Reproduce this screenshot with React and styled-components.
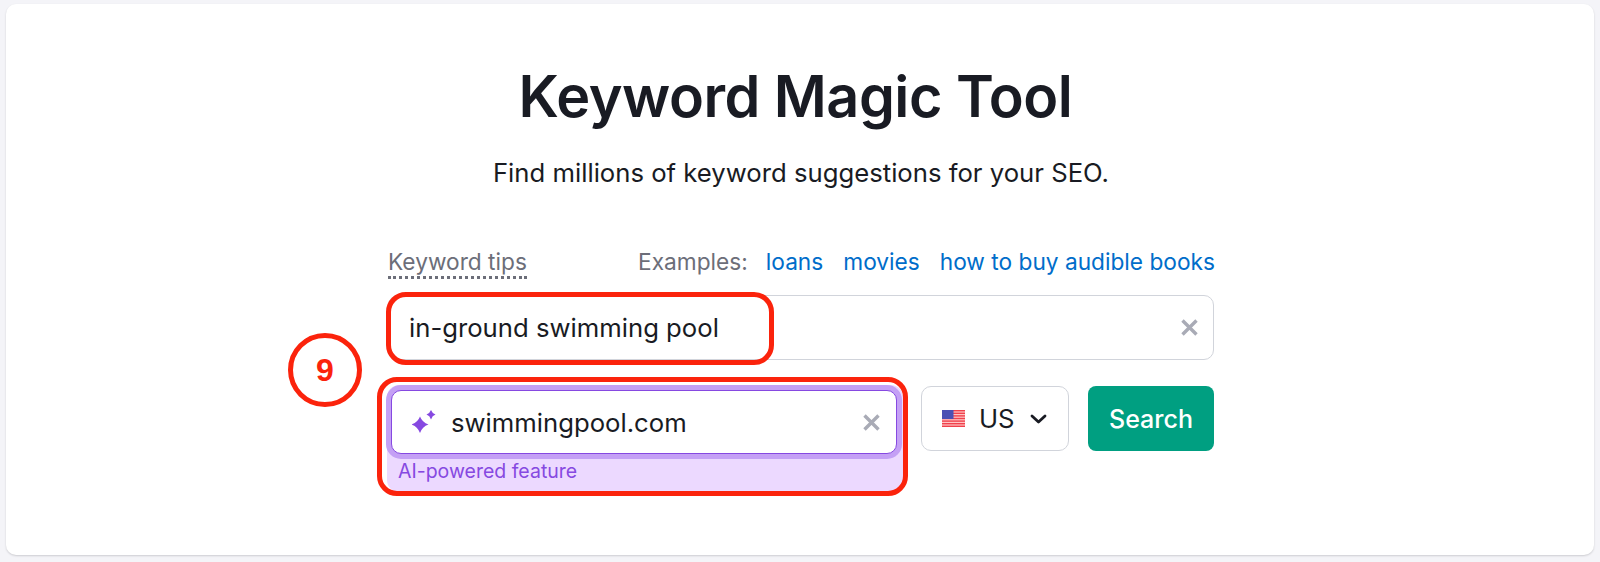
import React from "react";
import styled, { createGlobalStyle } from "styled-components";

const Global = createGlobalStyle`
  html, body { margin: 0; padding: 0; background: #f4f4f8; }
  body { font-family: Inter, "Liberation Sans", sans-serif; color: #191b23; }
`;

const Page = styled.div`
  width: 1600px;
  height: 562px;
  padding: 4px 6px 7px;
  box-sizing: border-box;
`;

const Card = styled.main`
  height: 100%;
  background: #fff;
  border-radius: 10px;
  box-shadow: 0 1px 2px rgba(25, 27, 35, 0.18);
  display: flex;
  flex-direction: column;
  align-items: center;
  padding-top: 56px;
  box-sizing: border-box;
`;

const Title = styled.h1`
  margin: 0 0 0 -9px;
  font-size: 57.5px;
  line-height: 72px;
  font-weight: 600;
  letter-spacing: -0.5px;
  color: #191b23;
`;

const Subtitle = styled.p`
  margin: 25px 0 0 2px;
  font-size: 25.7px;
  line-height: 32px;
  color: #191b23;
`;

const Form = styled.div`
  position: relative;
  width: 826px;
  margin: 59px 0 0 2px;
`;

const TopRow = styled.div`
  display: flex;
  justify-content: space-between;
  align-items: flex-start;
  height: 47px;
  font-size: 22.7px;
  line-height: 28px;
`;

const Tips = styled.span`
  color: #6c6e79;
  border-bottom: 3px dotted #6c6e79;
`;

const Examples = styled.div`
  display: flex;
  gap: 20px;
  margin-right: -1px;
`;

const ExamplesLabel = styled.span`
  color: #6c6e79;
  margin-right: -2px;
`;

const ExampleLink = styled.a`
  color: #006dca;
  text-decoration: none;
`;

const InputBox = styled.div`
  height: 65px;
  box-sizing: border-box;
  border: 1.5px solid #d1d4db;
  border-radius: 10px;
  display: flex;
  align-items: center;
  justify-content: space-between;
  padding: 0 15px 0 20px;
  font-size: 25.7px;
`;

const ClearIcon = styled.svg`
  width: 17px;
  height: 17px;
  display: block;
  flex: none;
`;

const BottomRow = styled.div`
  display: flex;
  align-items: flex-start;
  margin-top: 26px;
`;

const AiWrap = styled.div`
  width: 516px;
  height: 107px;
  margin: -1px 0 0 -1px;
  background: #ecd9ff;
  border-radius: 12px;
  box-sizing: border-box;
  flex: none;
  padding-top: 5px;
`;

const AiInput = styled.div`
  margin: 0 6px 0 4px;
  height: 64px;
  box-sizing: border-box;
  background: #fff;
  border: 1.5px solid #8649e1;
  border-radius: 10px;
  box-shadow: 0 0 0 5px #c4a0f5;
  display: flex;
  align-items: center;
  padding: 0 16px 0 20px;
  font-size: 25.7px;
`;

const AiValue = styled.span`
  flex: 1;
  margin-left: 15px;
`;

const AiNote = styled.div`
  margin: 5px 0 0 11px;
  font-size: 19.5px;
  line-height: 24px;
  color: #8649e1;
`;

const Select = styled.div`
  width: 148px;
  height: 65px;
  margin-left: 18px;
  box-sizing: border-box;
  border: 1.5px solid #d1d4db;
  border-radius: 10px;
  display: flex;
  align-items: center;
  padding-left: 20px;
  font-size: 25.7px;
  flex: none;
`;

const SelectValue = styled.span`
  margin: -1px 15px 0 14px;
`;

const SearchButton = styled.button`
  width: 126px;
  height: 65px;
  margin-left: 19px;
  border: 0;
  border-radius: 8px;
  background: #009f81;
  color: #fff;
  font: 500 25px Inter, "Liberation Sans", sans-serif;
  flex: none;
`;

const Marker = styled.div`
  position: absolute;
  box-sizing: border-box;
  border: 5px solid #fb230c;
  pointer-events: none;
`;

const KeywordMarker = styled(Marker)`
  left: -2px;
  top: 44px;
  width: 388px;
  height: 73px;
  border-radius: 20px;
`;

const AiMarker = styled(Marker)`
  left: -11px;
  top: 129px;
  width: 531px;
  height: 119px;
  border-radius: 20px;
`;

const NumberMarker = styled(Marker)`
  left: -100px;
  top: 85px;
  width: 74px;
  height: 74px;
  border-radius: 50%;
  display: flex;
  align-items: center;
  justify-content: center;
  color: #fb230c;
  font-family: "Liberation Sans", Arial, sans-serif;
  font-size: 32px;
  font-weight: 700;
`;

const Clear = () => (
  <ClearIcon viewBox="0 0 17 17" fill="none" stroke="#a9abb6" strokeWidth="3.4">
    <path d="M1.500 1.500l14 14M15.500 1.500l-14 14" />
  </ClearIcon>
);

const Sparkles = () => (
  <svg width="24" height="24" viewBox="0 0 24 24" fill="#8649e1" style={{ flex: "none" }}>
    <path d="M8 6.500Q10.200 12.300 16.500 14.500Q10.200 16.700 8 23Q5.800 16.700 -.5 14.500Q5.800 12.300 8 6.500z" />
    <path d="M19 0Q20.200 3.300 23.500 4.500Q20.200 5.700 19 9.500Q17.800 5.700 14.500 4.500Q17.800 3.300 19 0z" />
  </svg>
);

const Flag = () => (
  <svg width="23" height="17" viewBox="0 0 23 17" style={{ flex: "none" }}>
    <rect width="23" height="17" fill="#ffc4c4" />
    {[0, 2.600, 5.200, 7.800, 10.400, 13, 15.600].map((y) => (
      <rect key={y} y={y} width="23" height="1.400" fill="#f0414c" />
    ))}
    <rect width="11.500" height="9" fill="#4a50b4" />
  </svg>
);

const Chevron = () => (
  <svg width="17" height="10" viewBox="0 0 17 10" fill="none" stroke="#191b23" strokeWidth="2.800" strokeLinecap="round" strokeLinejoin="round">
    <path d="M2 2l6.500 6L15 2" />
  </svg>
);

export default function App() {
  return (
    <Page>
      <Global />
      <Card>
        <Title>Keyword Magic Tool</Title>
        <Subtitle>Find millions of keyword suggestions for your SEO.</Subtitle>
        <Form>
          <TopRow>
            <Tips>Keyword tips</Tips>
            <Examples>
              <ExamplesLabel>Examples:</ExamplesLabel>
              <ExampleLink>loans</ExampleLink>
              <ExampleLink>movies</ExampleLink>
              <ExampleLink>how to buy audible books</ExampleLink>
            </Examples>
          </TopRow>
          <InputBox>
            <span>in-ground swimming pool</span>
            <Clear />
          </InputBox>
          <BottomRow>
            <AiWrap>
              <AiInput>
                <Sparkles />
                <AiValue>swimmingpool.com</AiValue>
                <Clear />
              </AiInput>
              <AiNote>AI-powered feature</AiNote>
            </AiWrap>
            <Select>
              <Flag />
              <SelectValue>US</SelectValue>
              <Chevron />
            </Select>
            <SearchButton>Search</SearchButton>
          </BottomRow>
          <KeywordMarker />
          <AiMarker />
          <NumberMarker>9</NumberMarker>
        </Form>
      </Card>
    </Page>
  );
}
